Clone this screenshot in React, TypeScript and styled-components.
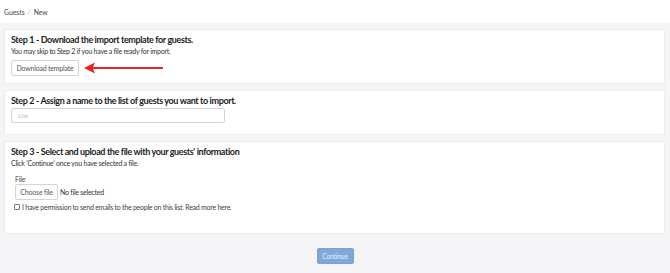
import styled, { createGlobalStyle } from "styled-components";

const GlobalStyle = createGlobalStyle`
  html, body {
    margin: 0;
    padding: 0;
    background: #f5f5f7;
    font-family: Lato, "Open Sans", sans-serif;
    color: #333;
  }
  * {
    box-sizing: border-box;
  }
`;

const Page = styled.div`
  width: 670px;
  height: 273px;
  background: #f5f5f7;
  display: flex;
  flex-direction: column;
`;

const TopBar = styled.header`
  height: 23px;
  background: #fff;
  display: flex;
  align-items: center;
  padding: 0 4px;
  font-size: 6.8px;
  color: #444;
`;

const Crumb = styled.span<{ $muted?: boolean }>`
  color: ${(p) => (p.$muted ? "#bbb" : "#444")};
  margin-right: 3px;
`;

const Main = styled.main`
  display: flex;
  flex-direction: column;
  gap: 6px;
  padding: 6px 5px 0 4px;
`;

const Card = styled.section<{ $bottom: number }>`
  background: #fff;
  border: 1px solid #ececef;
  border-radius: 2px;
  padding: 4px 6px ${(p) => p.$bottom}px;
  display: flex;
  flex-direction: column;
  align-items: flex-start;
`;

const Title = styled.h2`
  margin: 0;
  font-size: 9px;
  line-height: 12px;
  font-weight: 700;
  letter-spacing: -0.38px;
  color: #222;
`;

const Hint = styled.p`
  margin: 0;
  font-size: 7px;
  line-height: 10px;
  letter-spacing: -0.25px;
  color: #333;
`;

const ActionRow = styled.div`
  display: flex;
  align-items: center;
  gap: 5px;
  margin-top: 4px;
`;

const GhostButton = styled.button<{ $width: number }>`
  width: ${(p) => p.$width}px;
  height: 16px;
  padding: 0;
  background: #fff;
  border: 1px solid #d4d4d8;
  border-radius: 2px;
  font-family: inherit;
  font-size: 7px;
  letter-spacing: -0.2px;
  color: #555;
`;

const TextInput = styled.input`
  width: 214px;
  height: 15px;
  margin-top: 1px;
  padding: 0 6px;
  border: 1px solid #d4d4d8;
  border-radius: 2px;
  font-family: inherit;
  font-size: 6.5px;
  color: #333;
  outline: none;
  &::placeholder {
    color: #bbb;
  }
`;

const FieldLabel = styled.div`
  margin: 6px 0 0 4px;
  font-size: 7px;
  line-height: 10px;
  letter-spacing: -0.2px;
  color: #444;
`;

const FileRow = styled.div`
  display: flex;
  align-items: center;
  gap: 2px;
  margin-left: 4px;
`;

const FileName = styled.span`
  font-size: 7px;
  letter-spacing: -0.25px;
  color: #333;
`;

const CheckRow = styled.label`
  display: flex;
  align-items: center;
  gap: 2px;
  margin: 3px 0 0 3px;
  font-size: 7px;
  letter-spacing: -0.25px;
  color: #444;
`;

const Box = styled.span`
  width: 6px;
  height: 6px;
  border: 1px solid #777;
  border-radius: 1px;
  background: #fff;
`;

const Footer = styled.div`
  display: flex;
  justify-content: center;
  padding-top: 14px;
`;

const PrimaryButton = styled.button`
  width: 37px;
  height: 16px;
  padding: 0;
  background: #7fa8d8;
  border: 1px solid #7aa3d4;
  border-radius: 2px;
  font-family: inherit;
  font-size: 6.8px;
  letter-spacing: -0.2px;
  color: #e6eef8;
`;

const Arrow = () => (
  <svg width="80" height="12" viewBox="0 0 80 12">
    <path d="M0 6 L11 0.5 L9 5 L79 5 L79 7 L9 7 L11 11.5 Z" fill="#e8251c" />
  </svg>
);

export default function App() {
  return (
    <>
      <GlobalStyle />
      <Page>
        <TopBar>
          <Crumb>Guests</Crumb>
          <Crumb $muted>/</Crumb>
          <Crumb>New</Crumb>
        </TopBar>
        <Main>
          <Card $bottom={7}>
            <Title>Step 1 - Download the import template for guests.</Title>
            <Hint>You may skip to Step 2 if you have a file ready for import.</Hint>
            <ActionRow>
              <GhostButton $width={68}>Download template</GhostButton>
              <Arrow />
            </ActionRow>
          </Card>
          <Card $bottom={11}>
            <Title>Step 2 - Assign a name to the list of guests you want to import.</Title>
            <TextInput placeholder="List" />
          </Card>
          <Card $bottom={22}>
            <Title>Step 3 - Select and upload the file with your guests' information</Title>
            <Hint>Click 'Continue' once you have selected a file.</Hint>
            <FieldLabel>File</FieldLabel>
            <FileRow>
              <GhostButton $width={43}>Choose file</GhostButton>
              <FileName>No file selected</FileName>
            </FileRow>
            <CheckRow>
              <Box />
              I have permission to send emails to the people on this list. Read more here.
            </CheckRow>
          </Card>
        </Main>
        <Footer>
          <PrimaryButton>Continue</PrimaryButton>
        </Footer>
      </Page>
    </>
  );
}
